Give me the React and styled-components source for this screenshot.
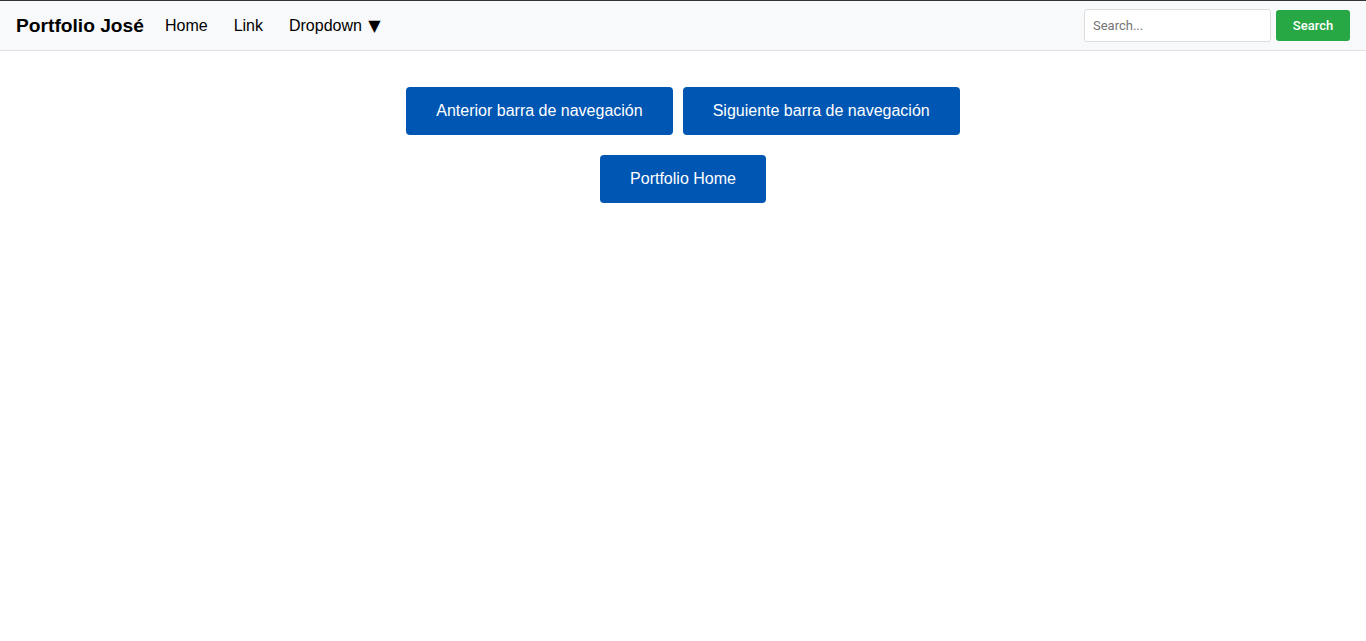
import React from 'react';
import styled, { createGlobalStyle } from 'styled-components';

const GlobalStyle = createGlobalStyle`
    body {
        margin: 0;
        font-family: "Liberation Sans", Arial, sans-serif;
        background: #fff;
    }
`;

const Navbar = styled.nav`
    display: flex;
    align-items: center;
    height: 49px;
    padding: 0 16px;
    background-color: #f8f9fa;
    border-top: 1px solid #333;
    border-bottom: 1px solid #dee2e6;
`;

const Brand = styled.a`
    font-size: 19.2px;
    font-weight: bold;
    color: #000;
    text-decoration: none;
    margin-right: 21px;
`;

const NavList = styled.ul`
    display: flex;
    align-items: center;
    list-style: none;
    margin: 0;
    padding: 0;
    gap: 26px;
    li a {
        font-size: 16px;
        color: #000;
        text-decoration: none;
    }
`;

const Caret = styled.span`
    font-family: "DejaVu Sans", sans-serif;
    font-size: 16px;
    margin-left: 2px;
`;

const SearchForm = styled.form`
    display: flex;
    align-items: center;
    margin-left: auto;
    gap: 5px;
`;

const SearchInput = styled.input`
    width: 187px;
    height: 33px;
    box-sizing: border-box;
    padding: 0 8px;
    border: 1px solid #ddd;
    border-radius: 3px;
    font-family: Roboto, "Liberation Sans", sans-serif;
    font-size: 13px;
    &::placeholder {
        color: #757575;
    }
`;

const SearchButton = styled.button`
    width: 74px;
    height: 31px;
    border: none;
    border-radius: 3px;
    background-color: #28a745;
    color: #fff;
    font-family: Roboto, "Liberation Sans", sans-serif;
    font-size: 13px;
    font-weight: 500;
`;

const Main = styled.main`
    display: flex;
    flex-direction: column;
    align-items: center;
    gap: 20px;
    padding-top: 36px;
`;

const ButtonRow = styled.div`
    display: flex;
    justify-content: center;
    gap: 10px;
`;

const NavButton = styled.button`
    height: 48px;
    padding: 0 30px;
    border: none;
    border-radius: 4px;
    background-color: #0056b3;
    color: #fff;
    font-family: "Liberation Sans", Arial, sans-serif;
    font-size: 16px;
    cursor: pointer;
`;

export default function App() {
    return (
        <>
            <GlobalStyle />
            <Navbar>
                <Brand href="#">Portfolio José</Brand>
                <NavList>
                    <li><a href="#">Home</a></li>
                    <li><a href="#">Link</a></li>
                    <li><a href="#">Dropdown <Caret>▼</Caret></a></li>
                </NavList>
                <SearchForm onSubmit={e => e.preventDefault()}>
                    <SearchInput type="text" placeholder="Search..." />
                    <SearchButton type="submit">Search</SearchButton>
                </SearchForm>
            </Navbar>
            <Main>
                <ButtonRow>
                    <NavButton>Anterior barra de navegación</NavButton>
                    <NavButton>Siguiente barra de navegación</NavButton>
                </ButtonRow>
                <ButtonRow>
                    <NavButton>Portfolio Home</NavButton>
                </ButtonRow>
            </Main>
        </>
    );
}
